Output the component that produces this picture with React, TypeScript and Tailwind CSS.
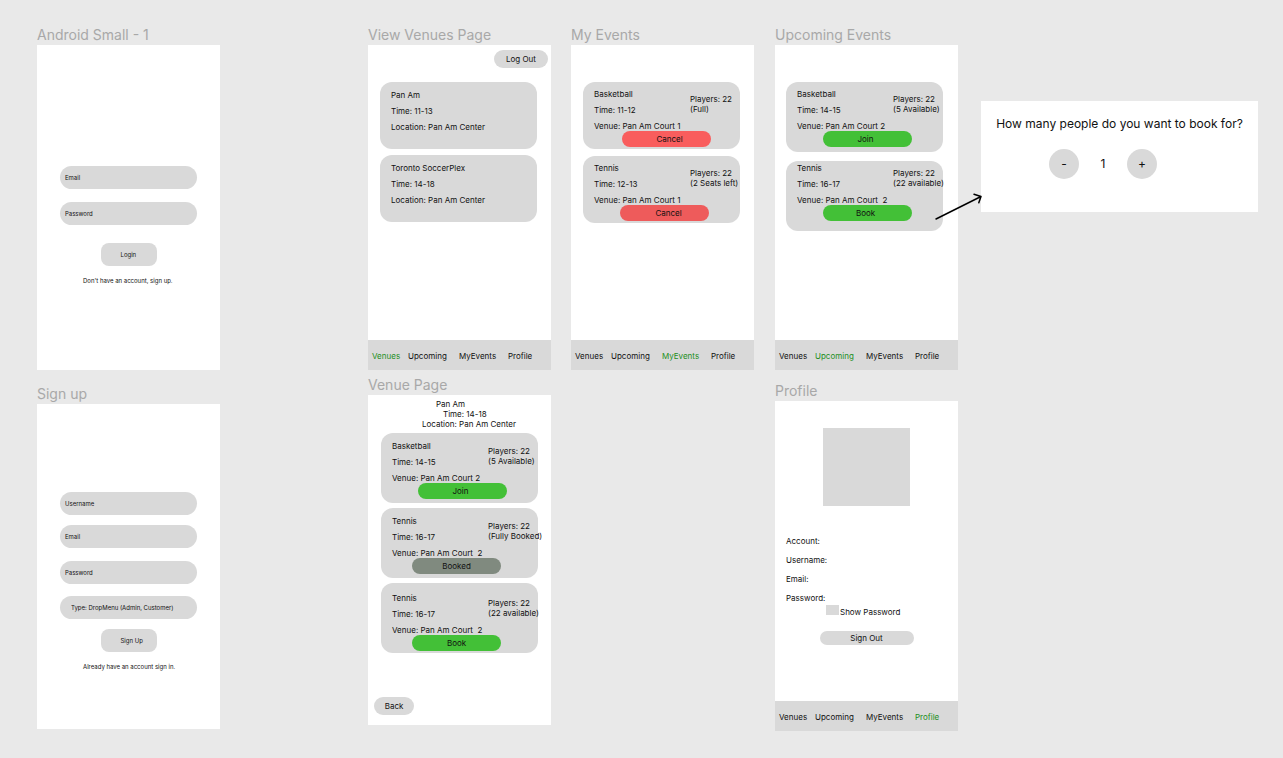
import React, {useState} from "react";
import clsx from "clsx";

type typeEvent = {
  name: string;
  time: string;
  venue: string;
  status: string;
  action: string;
  className: string;
  buttonClassName: string;
};

const tabs = ["Venues", "Upcoming", "MyEvents", "Profile"];

const venues = [
  {name: "Pan Am", time: "11-13", location: "Pan Am Center"},
  {name: "Toronto SoccerPlex", time: "14-18", location: "Pan Am Center"},
];

const myEvents: typeEvent[] = [
  {
    name: "Basketball",
    time: "11-12",
    venue: "Pan Am Court 1",
    status: "(Full)",
    action: "Cancel",
    className: "h-[67px] pt-[7px]",
    buttonClassName: "ml-[39px] pl-[6px] bg-[#f95d5d]",
  },
  {
    name: "Tennis",
    time: "12-13",
    venue: "Pan Am Court 1",
    status: "(2 Seats left)",
    action: "Cancel",
    className: "h-[67px] pt-[7px]",
    buttonClassName: "ml-[37px] pl-[8px] bg-[#ee5b5b]",
  },
];

const upcomingEvents: typeEvent[] = [
  {
    name: "Basketball",
    time: "14-15",
    venue: "Pan Am Court 2",
    status: "(5 Available)",
    action: "Join",
    className: "h-[70px] pt-[7px]",
    buttonClassName: "ml-[37px] pr-[4px] bg-[#43c037]",
  },
  {
    name: "Tennis",
    time: "16-17",
    venue: "Pan Am Court  2",
    status: "(22 available)",
    action: "Book",
    className: "h-[70px] pt-[2px]",
    buttonClassName: "ml-[37px] pr-[4px] bg-[#43c037]",
  },
];

const venueEvents: typeEvent[] = [
  {
    name: "Basketball",
    time: "14-15",
    venue: "Pan Am Court 2",
    status: "(5 Available)",
    action: "Join",
    className: "h-[70px] pt-[8px]",
    buttonClassName: "ml-[37px] pr-[4px] bg-[#43c037]",
  },
  {
    name: "Tennis",
    time: "16-17",
    venue: "Pan Am Court  2",
    status: "(Fully Booked)",
    action: "Booked",
    className: "h-[70px] pt-[8px]",
    buttonClassName: "ml-[31px] bg-[#808a7f]",
  },
  {
    name: "Tennis",
    time: "16-17",
    venue: "Pan Am Court  2",
    status: "(22 available)",
    action: "Book",
    className: "h-[70px] pt-[10px]",
    buttonClassName: "ml-[31px] bg-[#43c037]",
  },
];

const Frame: React.FC<{title: string; className: string; children: React.ReactNode}> = ({
  title,
  className,
  children,
}) => (
  <section className={clsx("absolute flex w-[183px] flex-col", className)}>
    <h2 className="h-5 text-[14px] leading-5 whitespace-nowrap text-[#a8a8a8]">{title}</h2>
    <div className="flex flex-1 flex-col bg-white">{children}</div>
  </section>
);

const TabBar: React.FC<{active: string}> = ({active}) => (
  <nav className="mt-auto grid h-[30px] grid-cols-[36px_51px_49px_auto] items-center bg-[#d9d9d9] pt-px pl-1">
    {tabs.map((tab) => (
      <a key={tab} className={tab === active ? "text-[#1d8f1d]" : ""} href="#">
        {tab}
      </a>
    ))}
  </nav>
);

const EventCard: React.FC<{event: typeEvent}> = ({event}) => (
  <article className={clsx("w-[157px] rounded-xl bg-[#d9d9d9]", event.className)}>
    <div className="grid grid-cols-[96px_auto] pl-[11px] whitespace-pre">
      <div className="flex flex-col gap-[6px]">
        <h3>{event.name}</h3>
        <p>Time: {event.time}</p>
        <p>Venue: {event.venue}</p>
      </div>
      <div className="w-0 pt-[5px]">
        <p>Players: 22</p>
        <p>{event.status}</p>
      </div>
    </div>
    <button className={clsx("h-4 w-[89px] rounded-full", event.buttonClassName)} type="button">
      {event.action}
    </button>
  </article>
);

const Field: React.FC<{label: string; type?: string}> = ({label, type = "text"}) => (
  <input
    aria-label={label}
    className="h-[23px] w-full rounded-full bg-[#d9d9d9] pl-[5px] text-[6px] placeholder:text-[#111] placeholder:opacity-100"
    placeholder={label}
    type={type}
  />
);

const BookingDialog = () => {
  const [people, setPeople] = useState<number>(1);

  return (
    <section className="absolute top-[101px] left-[981px] h-[111px] w-[277px] bg-white text-[12px] leading-4">
      <h2 className="pt-[15px] text-center whitespace-nowrap">
        How many people do you want to book for?
      </h2>
      <div className="mt-[17px] flex items-center gap-[18px] pl-[68px]">
        <button
          className="size-[30px] rounded-full bg-[#d9d9d9]"
          type="button"
          onClick={() => setPeople(Math.max(1, people - 1))}
        >
          -
        </button>
        <output className="w-3 text-center">{people}</output>
        <button
          className="size-[30px] rounded-full bg-[#d9d9d9]"
          type="button"
          onClick={() => setPeople(people + 1)}
        >
          +
        </button>
      </div>
    </section>
  );
};

const App = () => {
  return (
    <main className="relative min-h-screen overflow-hidden bg-[#e9e9e9] font-['Inter',sans-serif] text-[8px] leading-[10px] text-[#111]">
      <Frame className="top-[25px] left-[37px] h-[345px]" title="Android Small - 1">
        <form className="flex flex-col px-[23px] pt-[121px]">
          <div className="flex flex-col gap-[13px]">
            <Field label="Email" />
            <Field label="Password" type="password" />
          </div>
          <button
            className="mt-[18px] h-[23px] w-14 self-center rounded-lg bg-[#d9d9d9] pl-5 text-left text-[6px]"
            type="button"
          >
            Login
          </button>
          <p className="mt-[10px] pl-[23px] text-[6px] whitespace-nowrap">
            Don't have an account, <a href="#">sign up.</a>
          </p>
        </form>
      </Frame>

      <Frame className="top-[384px] left-[37px] h-[345px]" title="Sign up">
        <form className="flex flex-col px-[23px] pt-[88px]">
          <div className="flex flex-col gap-[10px]">
            <Field label="Username" />
            <Field label="Email" />
          </div>
          <div className="mt-[13px] flex flex-col gap-3">
            <Field label="Password" type="password" />
            <select
              aria-label="Type"
              className="h-[23px] w-full appearance-none rounded-full bg-[#d9d9d9] pl-[11px] text-[6px]"
            >
              <option>Type: DropMenu (Admin, Customer)</option>
            </select>
          </div>
          <button
            className="mt-[10px] h-[23px] w-14 self-center rounded-lg bg-[#d9d9d9] pl-5 text-left text-[6px]"
            type="button"
          >
            Sign Up
          </button>
          <p className="mt-[10px] pl-[23px] text-[6px] whitespace-nowrap">
            Already have an account <a href="#">sign in.</a>
          </p>
        </form>
      </Frame>

      <Frame className="top-[25px] left-[368px] h-[345px]" title="View Venues Page">
        <button
          className="mt-[5px] mr-[3px] h-[18px] w-[54px] self-end rounded-full bg-[#d9d9d9]"
          type="button"
        >
          Log Out
        </button>
        <div className="mt-[14px] flex flex-col gap-[6px] pl-3">
          {venues.map((venue) => (
            <article
              key={venue.name}
              className="flex h-[67px] w-[157px] flex-col gap-[6px] rounded-xl bg-[#d9d9d9] pt-[8px] pl-[11px]"
            >
              <h3>{venue.name}</h3>
              <p>Time: {venue.time}</p>
              <p>Location: {venue.location}</p>
            </article>
          ))}
        </div>
        <TabBar active="Venues" />
      </Frame>

      <Frame className="top-[25px] left-[571px] h-[345px]" title="My Events">
        <div className="flex flex-col gap-[7px] pt-[37px] pl-3">
          {myEvents.map((event) => (
            <EventCard key={event.name} event={event} />
          ))}
        </div>
        <TabBar active="MyEvents" />
      </Frame>

      <Frame className="top-[25px] left-[775px] h-[345px]" title="Upcoming Events">
        <div className="flex flex-col gap-[9px] pt-[37px] pl-[11px]">
          {upcomingEvents.map((event) => (
            <EventCard key={event.name} event={event} />
          ))}
        </div>
        <TabBar active="Upcoming" />
      </Frame>

      <Frame className="top-[375px] left-[368px] h-[350px]" title="Venue Page">
        <header className="pt-1 pl-[54px]">
          <h3 className="pl-[14px]">Pan Am</h3>
          <p className="pl-[21px]">Time: 14-18</p>
          <p>Location: Pan Am Center</p>
        </header>
        <div className="mt-1 flex flex-col gap-[5px] pl-[13px]">
          {venueEvents.map((event) => (
            <EventCard key={event.action} event={event} />
          ))}
        </div>
        <button
          className="mt-auto mb-[10px] ml-[6px] h-[18px] w-10 rounded-full bg-[#d9d9d9]"
          type="button"
        >
          Back
        </button>
      </Frame>

      <Frame className="top-[381px] left-[775px] h-[350px]" title="Profile">
        <div className="mt-[27px] h-[78px] w-[87px] self-center bg-[#d9d9d9]" />
        <div className="mt-[30px] flex flex-col gap-[9px] pl-[11px]">
          <p>Account:</p>
          <p>Username:</p>
          <p>Email:</p>
          <p>Password:</p>
        </div>
        <label className="mt-[2px] ml-[51px] flex gap-px">
          <input className="h-[10px] w-[13px] appearance-none bg-[#d9d9d9]" type="checkbox" />
          <span className="pt-[2px]">Show Password</span>
        </label>
        <button
          className="mt-[14px] h-[14px] w-[94px] self-center rounded-full bg-[#d9d9d9]"
          type="button"
        >
          Sign Out
        </button>
        <TabBar active="Profile" />
      </Frame>

      <BookingDialog />

      {/* connector from the Book card to the dialog */}
      <svg
        className="absolute top-[190px] left-[932px]"
        fill="none"
        height="34"
        stroke="#000"
        strokeLinecap="round"
        strokeLinejoin="round"
        strokeWidth="1.5"
        viewBox="0 0 52 34"
        width="52"
      >
        <path d="M4 29 49 6.500M42 4.300 49 6.500 46.800 12.800" />
      </svg>
    </main>
  );
};

export default App;
